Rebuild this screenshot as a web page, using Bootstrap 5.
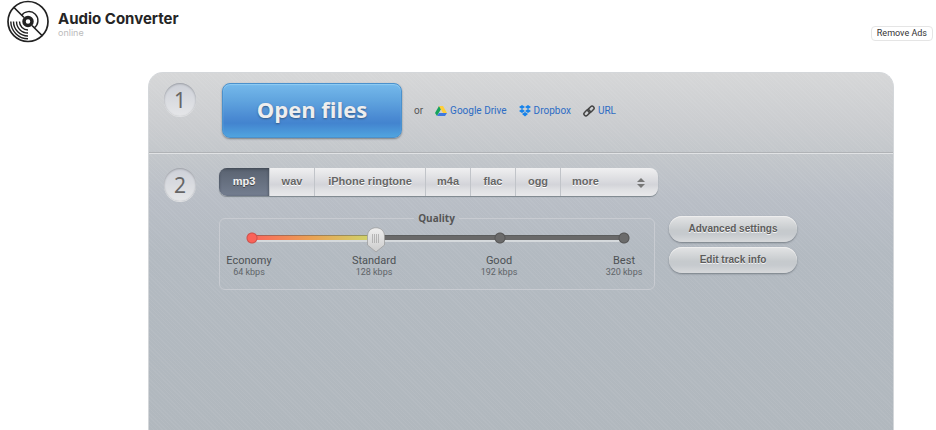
<!DOCTYPE html>
<html lang="en">
<head>
<meta charset="utf-8">
<meta name="viewport" content="width=device-width, initial-scale=1">
<title>Audio Converter online</title>
<link href="https://cdn.jsdelivr.net/npm/bootstrap@5.3.0/dist/css/bootstrap.min.css" rel="stylesheet">
<style>
body{font-family:Roboto,Tahoma,sans-serif;font-size:10px;line-height:12px;color:#555;background:#fff}
.site-head{height:72px;padding:0 3px 0 7px}
.logo{width:42px;height:43px}
.brand{font-family:Inter,Rubik,sans-serif;color:#252525;margin:11px 0 0 9px}
.brand h1{font-size:15px;line-height:16px}
.brand span{font-size:9px;line-height:12px;color:#bbb}
.ads{font-family:Roboto,Rubik,sans-serif;font-size:9px;line-height:11px;padding:1px 5px;margin-top:26px;color:#333;border:1px solid #e5e5e5;border-radius:4px;background:#fff}
.stage{padding-left:148px;padding-right:42px}
.panel{min-height:calc(100vh - 72px);border:1px solid #d4d7da;border-bottom:0;border-radius:15px 15px 0 0;overflow:hidden;
background:repeating-linear-gradient(45deg,#ffffff0c 0 1px,transparent 1px 3px),linear-gradient(#d6d7d8 0,#cbcdd0 50px,#c3c7cb 80px,#b9bec6 125px,#b3bac1 180px,#b1b8be 360px)}
.step{padding-left:15px}
.step-one{height:80px;padding-top:10px;border-bottom:1px solid #b0b3b6}
.step-two{padding-top:14px;border-top:1px solid #e1e3e5}
.num{width:32px;height:33px;border-radius:50%;font:21px/24px "Noto Sans",Tahoma,sans-serif;color:#666;background:linear-gradient(#cdd0d8,#e5e6e8);box-shadow:inset 0 1px 2px #999ca2,0 1px 0 #e0e1e3}
.open{width:180px;height:55px;margin-left:26px;padding-bottom:4px;font:700 22px/28px "Open Sans",Tahoma,sans-serif;color:#eee;text-shadow:0 1px 2px #345a87;border:1px solid #4b91cc;border-radius:8px;background:linear-gradient(#75b9eb,#61a5df 30%,#4989d2 65%,#4384cf 74%,#50a4df);box-shadow:inset 0 1px 1px #91ccf3,0 1px 2px #777e85}
.sources{height:55px;margin-left:12px;gap:12px}
.sources a{color:#2d6cc4;text-decoration:none;gap:3px}
.sources svg{width:12px;height:12px}
.work{margin-left:23px}
.formats{max-width:439px;height:28px;border-radius:8px;overflow:hidden;font:700 11px/14px "Liberation Sans",Arial,sans-serif;background:linear-gradient(#f0f0f1,#d3d4d9 60%,#dedfe2 75%,#e9e9eb);box-shadow:0 1px 1px #7d858c}
.formats label,.formats select{font:inherit;color:#666;border:0;border-right:1px solid #c1c4c9;text-shadow:0 1px #fff}
.formats label{padding-bottom:2px}
.formats select{width:97px;padding:0 11px 2px;border:0;appearance:none;background:transparent}
.formats .btn-check:checked+label{color:#f2f2f2;background:linear-gradient(#596270,#747e90);box-shadow:inset 0 1px 3px #3d444f;text-shadow:0 1px #444}
.w-sm{width:45px}.w-md{width:51px}.w-lg{width:111px}
.arrows{position:absolute;right:13px;top:10px;width:8px;height:10px;pointer-events:none}
.lower{margin-top:20px;gap:14px}
.quality{width:436px;height:78px;border:1px solid #c8cbd1;border-radius:6px;margin-top:-4px;padding:0 5px 0 4px}
.quality legend{float:none;width:auto;margin:0 auto;padding:0 4px;font:700 10px/12px "Open Sans",Tahoma,sans-serif;color:#555}
.rail{display:block;width:390px;height:26px;margin:3px 0 0 19px;appearance:none;
background:radial-gradient(circle 6px at 9px 11px,#fa6258 0 4px,#cb514b 5px,transparent 6px),radial-gradient(circle 6px at 257px 11px,#6b6b6b 0 4px,#555 5px,transparent 6px),radial-gradient(circle 6px at 381px 11px,#6b6b6b 0 4px,#555 5px,transparent 6px),linear-gradient(#4c4f4f70 0 1px,transparent 1px) 9px 8px/372px 5px no-repeat,linear-gradient(90deg,#fb655b,#eaa253 60px,#ced66c 121px,#696969 122px) 9px 8px/372px 5px no-repeat,linear-gradient(#d5d9dc,#d5d9dc) 9px 13px/372px 2px no-repeat}
.rail::-webkit-slider-runnable-track{height:26px;background:transparent}
.rail::-webkit-slider-thumb{appearance:none;width:18px;height:26px;background:url("data:image/svg+xml,%3Csvg xmlns='http://www.w3.org/2000/svg' viewBox='0 0 18 26'%3E%3Cdefs%3E%3ClinearGradient id='g' x2='0' y2='1'%3E%3Cstop stop-color='%23eee'/%3E%3Cstop offset='1' stop-color='%23ccc'/%3E%3C/linearGradient%3E%3C/defs%3E%3Cpath d='M.5 9C.5-2 17.500-2 17.500 9V18L9 25 .5 18Z' fill='url(%23g)' stroke='%23999' stroke-width='.7'/%3E%3Cpath d='M5.500 7v9M7.500 7v9M9.500 7v9M11.500 7v9' stroke='%23aaa' stroke-width='.8'/%3E%3C/svg%3E")}
.levels{margin-top:1px}
.levels div{width:50px;text-align:center;font-size:9px;line-height:11px;color:#606468}
.levels b{display:block;font-size:11px;line-height:13px;font-weight:400;color:#4d5154}
.actions{gap:5px;width:128px}
.actions button{height:26px;font:700 10px/14px "Liberation Sans",Arial,sans-serif;color:#5c5c5c;text-shadow:0 1px #f5f5f5;border:0;border-radius:13px;background:linear-gradient(#e3e4e5,#c6cacd 55%,#c6cace 70%,#d7d9db);box-shadow:inset 0 1px #eee,0 1px 2px #777e86}
</style>
<script src="https://cdn.jsdelivr.net/npm/bootstrap@5.3.0/dist/js/bootstrap.bundle.min.js"></script>
</head>
<body>
<header class="site-head d-flex align-items-start">
  <svg class="logo flex-shrink-0" viewBox="0 0 42 43" fill="none" stroke="#222" stroke-width="1.700" aria-hidden="true">
    <circle cx="21" cy="21.500" r="20"/>
    <path d="M7 7.500 17 17.500M25 25.500l10.500 10.500"/>
    <circle cx="21" cy="21.500" r="4" stroke-width="3.500"/>
    <path d="M14.500 15.500a9 9 0 1 1 12.500 12.500M12.500 21.500a8.500 8.500 0 0 0 8.500 8.500M9.500 21.500a11.500 11.500 0 0 0 11.500 11.500M6.500 21.500a14.500 14.500 0 0 0 14.500 14.500M3.800 21.500a17.200 17.200 0 0 0 17.200 17.200" stroke-width="1.400"/>
  </svg>
  <div class="brand"><h1 class="fw-bold m-0">Audio Converter</h1><span class="d-block">online</span></div>
  <button class="ads ms-auto" type="button">Remove Ads</button>
</header>
<main class="stage">
  <div class="panel">
    <section class="step step-one d-flex align-items-start">
      <div class="num d-flex align-items-center justify-content-center flex-shrink-0">1</div>
      <button class="open flex-shrink-0" type="button">Open files</button>
      <div class="sources d-flex align-items-center">
        <span>or</span>
        <a href="#" class="d-flex align-items-center"><svg viewBox="0 0 12 12" aria-hidden="true"><path d="M4 1 0 8l2 3 4-7z" fill="#15a35b"/><path d="M4 1h4l4 7H8z" fill="#ffce37"/><path d="M4 8h8l-2 3H2z" fill="#3e78df"/></svg>Google Drive</a>
        <a href="#" class="d-flex align-items-center"><svg viewBox="0 0 12 12" fill="#1683eb" aria-hidden="true"><path d="m3 0 3 2-3 2-3-2zM9 0l3 2-3 2-3-2zM3 4l3 2-3 2-3-2zM9 4l3 2-3 2-3-2zM6 7l3 2-3 2.500L3 9z"/></svg>Dropbox</a>
        <a href="#" class="d-flex align-items-center"><svg viewBox="0 0 12 12" fill="none" stroke="#444" stroke-width="1.500" aria-hidden="true"><rect x="4.500" y="2.200" width="7" height="4" rx="2" transform="rotate(-45 8 4.200)"/><rect x=".5" y="5.800" width="7" height="4" rx="2" transform="rotate(-45 4 7.800)"/></svg>URL</a>
      </div>
    </section>
    <section class="step step-two d-flex align-items-start">
      <div class="num d-flex align-items-center justify-content-center flex-shrink-0">2</div>
      <div class="work flex-grow-1">
        <div class="formats d-flex">
          <input class="btn-check" type="radio" name="format" id="mp3" checked><label class="w-md d-flex align-items-center justify-content-center" for="mp3">mp3</label>
          <input class="btn-check" type="radio" name="format" id="wav"><label class="w-sm d-flex align-items-center justify-content-center" for="wav">wav</label>
          <input class="btn-check" type="radio" name="format" id="ringtone"><label class="w-lg d-flex align-items-center justify-content-center" for="ringtone">iPhone ringtone</label>
          <input class="btn-check" type="radio" name="format" id="m4a"><label class="w-sm d-flex align-items-center justify-content-center" for="m4a">m4a</label>
          <input class="btn-check" type="radio" name="format" id="flac"><label class="w-sm d-flex align-items-center justify-content-center" for="flac">flac</label>
          <input class="btn-check" type="radio" name="format" id="ogg"><label class="w-sm d-flex align-items-center justify-content-center" for="ogg">ogg</label>
          <div class="position-relative d-flex"><select aria-label="More formats"><option>more</option></select><svg class="arrows" viewBox="0 0 8 10" fill="#777" aria-hidden="true"><path d="m4 0 4 4H0zM4 10 0 6h8z"/></svg></div>
        </div>
        <div class="lower d-flex align-items-start">
          <fieldset class="quality flex-shrink-0">
            <legend>Quality</legend>
            <input class="rail" type="range" min="0" max="3" value="1" aria-label="Quality">
            <div class="levels d-flex justify-content-between">
              <div><b>Economy</b>64 kbps</div><div><b>Standard</b>128 kbps</div><div><b>Good</b>192 kbps</div><div><b>Best</b>320 kbps</div>
            </div>
          </fieldset>
          <div class="actions d-flex flex-column flex-shrink-0">
            <button type="button">Advanced settings</button>
            <button type="button">Edit track info</button>
          </div>
        </div>
      </div>
    </section>
  </div>
</main>
</body>
</html>
